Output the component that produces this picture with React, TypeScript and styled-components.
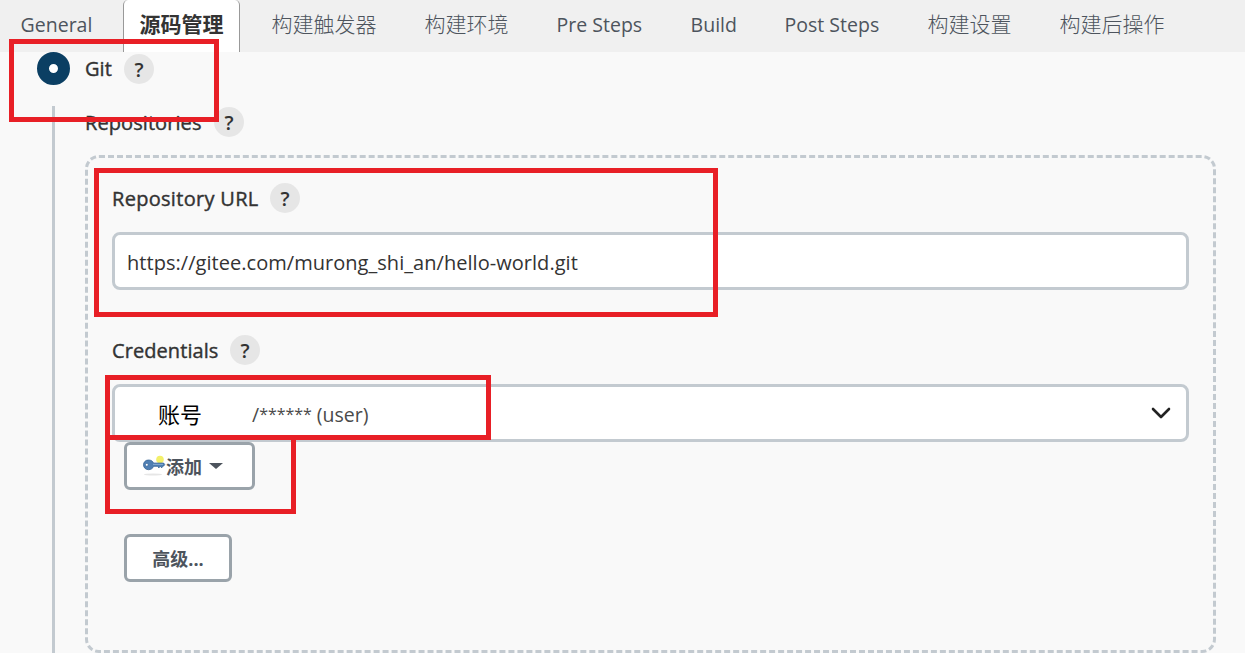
import styled, { createGlobalStyle } from 'styled-components';

const tabs = [
  { label: 'General', width: 71, latin: true },
  { label: '源码管理', width: 84, active: true },
  { label: '构建触发器', width: 105 },
  { label: '构建环境', width: 84 },
  { label: 'Pre Steps', width: 86, latin: true },
  { label: 'Build', width: 46, latin: true },
  { label: 'Post Steps', width: 95, latin: true },
  { label: '构建设置', width: 84 },
  { label: '构建后操作', width: 105 },
];

const marks = [
  { x: 9, y: 39, w: 210, h: 83 },
  { x: 94, y: 168, w: 624, h: 149 },
  { x: 105, y: 375, w: 386, h: 65 },
  { x: 105, y: 435, w: 191, h: 79 },
];

const KeyIcon = () => (
  <svg width='24' height='22' viewBox='0 0 24 22'>
    <ellipse cx='11' cy='19.5' rx='9' ry='1' fill='#e6e6e6' />
    <circle cx='18' cy='4.5' r='3.8' fill='#f3f06a' />
    <path
      d='M6.500 5c2.600 0 4.400 1.300 5 3.100h10.200l1 1.400-1 1.600h-1l-1 1.800-1.400-1.600-1.500 1.600-1.200-1.600h-4c-.7 2-2.600 3.400-5.100 3.400C3.500 14.700 1.500 12.500 1.500 9.800S3.600 5 6.500 5Z'
      fill='#4f7fb3'
      stroke='#376596'
      strokeWidth='.8'
    />
    <path d='M11 9.300h10' stroke='#8db1d6' strokeWidth='1' />
    <circle cx='4.800' cy='9.800' r='1.400' fill='#fff' stroke='#2f5f96' strokeWidth='.6' />
  </svg>
);

const App = () => {
  return (
    <Page>
      <GlobalStyle />
      <TabBar>
        {tabs.map(({ label, width, active, latin }) => (
          <Tab key={label} $width={width} $active={active} $latin={latin}>
            {label}
          </Tab>
        ))}
      </TabBar>
      <RadioRow>
        <Radio />
        <Label $width={27}>Git</Label>
        <Help>?</Help>
      </RadioRow>
      <Nested>
        <LabelRow>
          <Label $width={117}>Repositories</Label>
          <Help>?</Help>
        </LabelRow>
        <Repository>
          <LabelRow>
            <Label $width={146} $spacing={0.3}>
              Repository URL
            </Label>
            <Help>?</Help>
          </LabelRow>
          <Field>
            <Url>https://gitee.com/murong_shi_an/hello-world.git</Url>
          </Field>
          <LabelRow $top={45}>
            <Label $width={106}>Credentials</Label>
            <Help>?</Help>
          </LabelRow>
          <Field>
            <Account>账号</Account>
            <User>
              /<Masked>******</Masked> (user)
            </User>
            <Chevron viewBox='0 0 20 12'>
              <path d='m2 2 8 8 8-8' />
            </Chevron>
          </Field>
          <AddButton>
            <KeyIcon />
            添加
            <Caret />
          </AddButton>
          <AdvancedButton>高级...</AdvancedButton>
        </Repository>
      </Nested>
      {marks.map(({ x, y, w, h }) => (
        <Mark key={y} $x={x} $y={y} $w={w} $h={h} />
      ))}
    </Page>
  );
};

export default App;

const GlobalStyle = createGlobalStyle`
  * {
    box-sizing: border-box;
  }

  body {
    margin: 0;
    overflow: hidden;
    background: #f9f9f9;
    font-family: 'Open Sans', 'Noto Sans CJK SC', sans-serif;
  }
`;

const Page = styled.main`
  position: relative;
  width: 1245px;
  height: 653px;
  overflow: hidden;
  background: #f9f9f9;
  color: #333;
`;

const TabBar = styled.nav`
  display: flex;
  gap: 15px;
  height: 52px;
  padding-left: 4px;
  background: #f0f0f0;
`;

const Tab = styled.div<{ $width: number; $active?: boolean; $latin?: boolean }>`
  flex: none;
  width: ${({ $width }) => $width + 33}px;
  padding-left: 15.6px;
  border: solid ${({ $active }) => ($active ? '#999' : 'transparent')};
  border-width: 0 1px;
  border-radius: 5px 5px 0 0;
  background: ${({ $active }) => ($active ? '#fff' : 'none')};
  color: ${({ $active }) => ($active ? '#333' : '#4d545d')};
  font-size: ${({ $latin }) => ($latin ? 19.5 : 21)}px;
  font-weight: ${({ $active, $latin }) => ($active ? 700 : $latin ? 400 : 300)};
  line-height: 49px;
  white-space: nowrap;
`;

const RadioRow = styled.div`
  display: flex;
  align-items: center;
  height: 33px;
  padding-left: 37px;
`;

const Radio = styled.span`
  width: 33px;
  height: 33px;
  margin-right: 15px;
  border: 12px solid #0b3f63;
  border-radius: 50%;
  background: #fff;
`;

const Label = styled.span<{ $width: number; $spacing?: number }>`
  width: ${({ $width }) => $width}px;
  margin-right: 12px;
  padding-top: 1px;
  font-size: 20px;
  letter-spacing: ${({ $spacing = 0.08 }) => $spacing}px;
  line-height: 30px;
  white-space: nowrap;
  -webkit-text-stroke: 0.4px #333;
`;

const Help = styled.span`
  width: 30px;
  height: 30px;
  border-radius: 50%;
  background: #e6e6e6;
  font-size: 20px;
  font-weight: 600;
  line-height: 31px;
  text-align: center;
`;

const Nested = styled.div`
  height: 560px;
  margin: 21px 0 0 52px;
  padding: 1px 0 0 30px;
  border-left: 3px solid #c3cad0;
`;

const LabelRow = styled.div<{ $top?: number }>`
  display: flex;
  align-items: center;
  height: 30px;
  margin-top: ${({ $top = 0 }) => $top}px;
`;

const Repository = styled.section`
  width: 1131px;
  height: 498px;
  margin-top: 18px;
  padding: 25px 24px 0;
  border: 3px dashed #c3cad0;
  border-radius: 14px;
`;

const Field = styled.div`
  display: flex;
  align-items: center;
  height: 58px;
  margin-top: 19px;
  padding: 0 15px 0 12px;
  border: 3px solid #c3cad0;
  border-radius: 8px;
  background: #fff;
`;

const Url = styled.span`
  padding-top: 2px;
  font-size: 20px;
  letter-spacing: 0.04px;
  white-space: nowrap;
`;

const Account = styled.span`
  width: 94px;
  margin-left: 31px;
  color: #000;
  font-size: 22px;
`;

const User = styled.span`
  padding-top: 2px;
  color: #4a4a4a;
  font-size: 19.5px;
  white-space: nowrap;
`;

const Masked = styled.span`
  font-size: 16px;
  letter-spacing: -0.05px;
  vertical-align: 2px;
`;

const Chevron = styled.svg`
  width: 20px;
  height: 12px;
  margin-left: auto;
  fill: none;
  stroke: #222;
  stroke-linecap: round;
  stroke-linejoin: round;
  stroke-width: 2.6;
`;

const Button = styled.button`
  display: flex;
  align-items: center;
  height: 48px;
  margin: 0 0 0 12px;
  padding: 0;
  border: 3px solid #9aa3aa;
  border-radius: 6px;
  background: #fff;
  color: #4d545d;
  font-family: inherit;
  font-size: 18px;
  font-weight: 700;
`;

const AddButton = styled(Button)`
  width: 131px;
  padding-left: 15px;
`;

const AdvancedButton = styled(Button)`
  justify-content: center;
  width: 108px;
  margin-top: 44px;
`;

const Caret = styled.span`
  margin-left: 7px;
  border: solid transparent;
  border-width: 6px 7px 0;
  border-top-color: #4d545d;
`;

// Highlight frames drawn over the form
const Mark = styled.div<{ $x: number; $y: number; $w: number; $h: number }>`
  position: absolute;
  top: ${({ $y }) => $y}px;
  left: ${({ $x }) => $x}px;
  width: ${({ $w }) => $w}px;
  height: ${({ $h }) => $h}px;
  border: 5px solid #e81f26;
`;
